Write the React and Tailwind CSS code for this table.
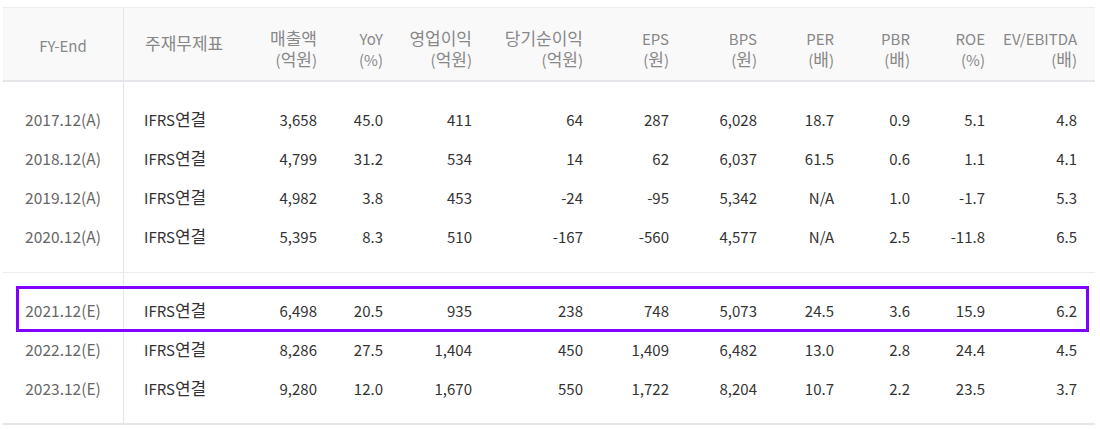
import React from "react";

const headers = [
  ["매출액", "(억원)"],
  ["YoY", "(%)"],
  ["영업이익", "(억원)"],
  ["당기순이익", "(억원)"],
  ["EPS", "(원)"],
  ["BPS", "(원)"],
  ["PER", "(배)"],
  ["PBR", "(배)"],
  ["ROE", "(%)"],
  ["EV/EBITDA", "(배)"],
];

const actual = [
  ["2017.12(A)", "3,658", "45.0", "411", "64", "287", "6,028", "18.7", "0.9", "5.1", "4.8"],
  ["2018.12(A)", "4,799", "31.2", "534", "14", "62", "6,037", "61.5", "0.6", "1.1", "4.1"],
  ["2019.12(A)", "4,982", "3.8", "453", "-24", "-95", "5,342", "N/A", "1.0", "-1.7", "5.3"],
  ["2020.12(A)", "5,395", "8.3", "510", "-167", "-560", "4,577", "N/A", "2.5", "-11.8", "6.5"],
];

const estimate = [
  ["2021.12(E)", "6,498", "20.5", "935", "238", "748", "5,073", "24.5", "3.6", "15.9", "6.2"],
  ["2022.12(E)", "8,286", "27.5", "1,404", "450", "1,409", "6,482", "13.0", "2.8", "24.4", "4.5"],
  ["2023.12(E)", "9,280", "12.0", "1,670", "550", "1,722", "8,204", "10.7", "2.2", "23.5", "3.7"],
];

const grid =
  "grid grid-cols-[121px_116px_77px_66px_89px_111px_86px_88px_77px_76px_75px_92px]";

// hangul renders larger than latin in the reference
function Ko({ text }) {
  return text.split(/([\uac00-\ud7a3]+)/).map((part, i) =>
    /[\uac00-\ud7a3]/.test(part) ? (
      <span key={i} className="text-[17px] leading-none">
        {part}
      </span>
    ) : (
      part
    )
  );
}

function Row({ row, pad = "" }) {
  const [date, ...nums] = row;
  return (
    <div className={grid}>
      <div className={`border-r border-[#e6e6ea] text-center text-[#666] text-[15.5px] leading-[39px] ${pad}`}>
        {date}
      </div>
      <div className={`pl-[20px] text-[#333] leading-[39px] ${pad}`}>
        IFRS<Ko text="연결" />
      </div>
      {nums.map((n, i) => (
        <div key={i} className={`text-right text-[#333] leading-[39px] ${pad}`}>
          {n}
        </div>
      ))}
    </div>
  );
}

export default function App() {
  return (
    <div
      className="w-[1100px] h-[429px] bg-white text-[15px]"
      style={{ fontFamily: '"Noto Sans CJK KR", "Noto Sans", sans-serif' }}
    >
      <div className="ml-[3px] mt-[7px] w-[1092px] border-t border-[#ececf0] border-b-2 border-b-[#e6e6ea]">
        {/* header */}
        <div className="bg-[#f9f9fa] border-b-2 border-[#e6e6ea] pr-[18px]">
          <div className={`${grid} h-[72px] text-[#888]`}>
            <div className="border-r border-[#e6e6ea] text-center pt-[28px] leading-[20px]">FY-End</div>
            <div className="pl-[21px] pt-[26px] leading-[20px]">
              <Ko text="주재무제표" />
            </div>
            {headers.map(([a, b]) => (
              <div key={a} className="flex flex-col items-end pt-[20px] leading-[21px] whitespace-nowrap">
                <span className="h-[21px]">
                  <Ko text={a} />
                </span>
                <span className="h-[21px]">
                  <Ko text={b} />
                </span>
              </div>
            ))}
          </div>
        </div>

        {/* actual */}
        <div className="border-b border-[#ececf0] pr-[18px]">
          {actual.map((r, i) => (
            <Row
              key={r[0]}
              row={r}
              pad={i === 0 ? "pt-[18px]" : i === actual.length - 1 ? "pb-[16px]" : ""}
            />
          ))}
        </div>

        {/* estimate */}
        <div className="relative pr-[18px]">
          {estimate.map((r, i) => (
            <Row
              key={r[0]}
              row={r}
              pad={i === 0 ? "pt-[18px]" : i === estimate.length - 1 ? "pb-[15px]" : ""}
            />
          ))}
          <div className="absolute left-[13px] top-[13px] w-[1073px] h-[46px] border-[3px] border-[#8000ff]" />
        </div>
      </div>
    </div>
  );
}
